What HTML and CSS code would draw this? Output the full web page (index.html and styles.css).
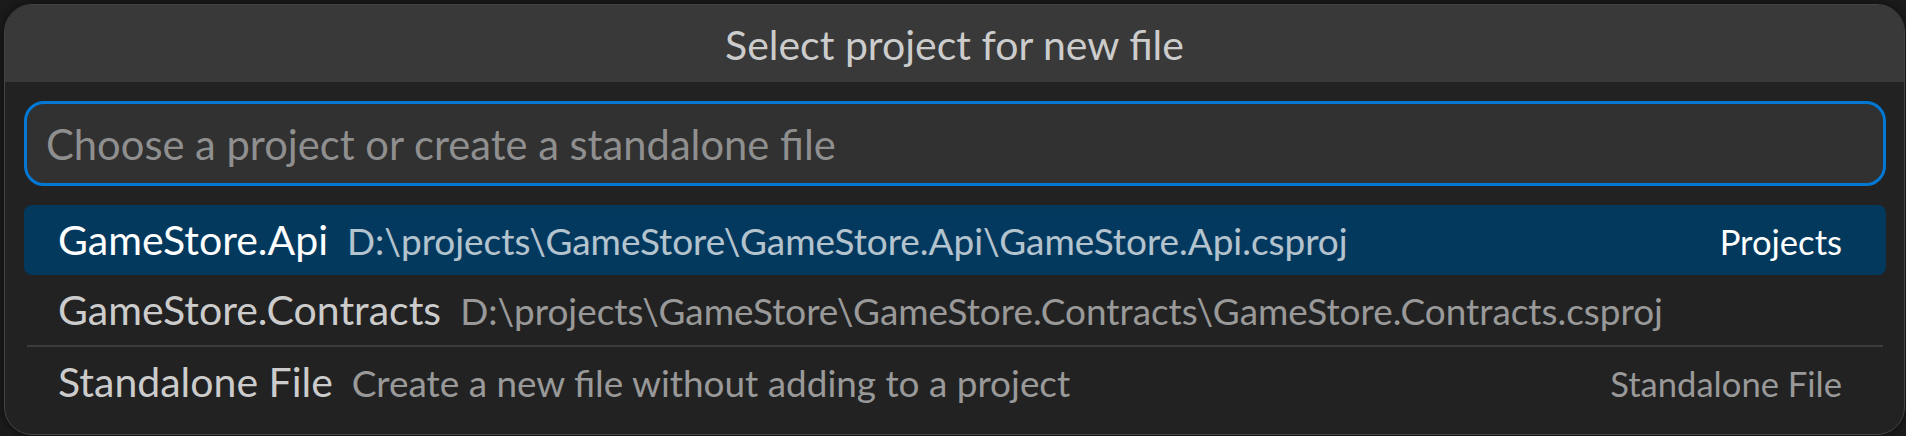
FILE: index.html
```html
<!DOCTYPE html>
<html lang="en">
<head>
    <meta charset="UTF-8">
    <meta name="viewport" content="width=device-width, initial-scale=1.0">
    <title>Select project for new file</title>
    <link rel="stylesheet" href="styles.css">
</head>
<body>

    <div class="quick-input">
        <div class="qi-title">Select project for new file</div>
        <div class="qi-body">
            <input type="text" class="qi-input" placeholder="Choose a project or create a standalone file">

            <div class="qi-list">
                <div class="qi-row selected">
                    <span class="qi-label">GameStore.Api</span>
                    <span class="qi-desc">D:\projects\GameStore\GameStore.Api\GameStore.Api.csproj</span>
                    <span class="qi-detail">Projects</span>
                </div>
                <div class="qi-row">
                    <span class="qi-label">GameStore.Contracts</span>
                    <span class="qi-desc">D:\projects\GameStore\GameStore.Contracts\GameStore.Contracts.csproj</span>
                </div>
                <div class="qi-row separator">
                    <span class="qi-label">Standalone File</span>
                    <span class="qi-desc">Create a new file without adding to a project</span>
                    <span class="qi-detail">Standalone File</span>
                </div>
            </div>
        </div>
    </div>

</body>
</html>
```
FILE: styles.css
```css
html, body {
    height: 100%;
}
body {
    margin: 0;
    background-color: #1b1b1b;
    font-family: Lato, "Open Sans", sans-serif;
    overflow: hidden;
}
.quick-input {
    margin: 4px 1px 0 4px;
    height: 431px;
    box-sizing: border-box;
    background-color: #222222;
    border: 1px solid #454545;
    border-radius: 28px;
    box-shadow: 0 0 8px 2px rgba(0, 0, 0, 0.36);
    overflow: hidden;
}
.qi-title {
    background-color: #393939;
    color: #cccccc;
    font-size: 41px;
    height: 77px;
    box-sizing: border-box;
    padding-top: 3px;
    line-height: 74px;
    text-align: center;
}
.qi-body {
    padding: 19px 18px 0 19px;
}
.qi-input {
    display: block;
    width: 100%;
    height: 85px;
    box-sizing: border-box;
    margin: 0;
    padding: 0 19px;
    background-color: #313131;
    border: 3px solid #0078d4;
    border-radius: 20px;
    outline: none;
    color: #cccccc;
    font-family: Lato, "Open Sans", sans-serif;
    font-size: 41.7px;
}
.qi-input::placeholder {
    color: #8f8f8f;
}
.qi-list {
    margin-top: 19px;
}
.qi-row {
    display: flex;
    align-items: baseline;
    height: 70px;
    line-height: 70px;
    padding: 0 44px 0 34px;
    border-radius: 8px;
    color: #cccccc;
    font-size: 41px;
    white-space: nowrap;
}
.qi-row.selected {
    background-color: #04395e;
    color: #ffffff;
}
.qi-row.separator {
    margin: 0 3px;
    padding-left: 31px;
    padding-right: 41px;
    border-top: 2px solid #3c3c3c;
    border-radius: 0;
}
.qi-desc {
    margin-left: 19px;
    font-size: 0.9em;
    opacity: 0.7;
}
.qi-detail {
    margin-left: auto;
    font-size: 34.6px;
}
.qi-row.separator .qi-detail {
    color: #999999;
}
```
